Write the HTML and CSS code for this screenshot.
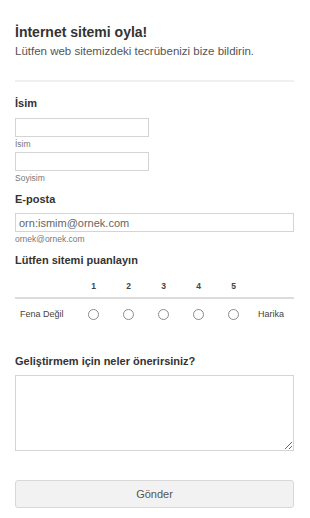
FILE: index.html
```html
<!DOCTYPE html>
<html lang="tr">
  <head>
    <meta charset="UTF-8" />
    <meta name="viewport" content="width=device-width, initial-scale=1.0" />
    <title>İnternet sitemi oyla!</title>
    <link rel="stylesheet" href="styles.css">
  </head>
  <body>
    <main class="survey">
      <h1 class="title">İnternet sitemi oyla!</h1>
      <p class="lead">Lütfen web sitemizdeki tecrübenizi bize bildirin.</p>
      <hr class="divider">

      <div class="field">
        <h2 class="label">İsim</h2>
        <input class="text-input short" type="text">
        <span class="hint">İsim</span>
        <input class="text-input short second" type="text">
        <span class="hint">Soyisim</span>
      </div>

      <div class="field">
        <h2 class="label">E-posta</h2>
        <input class="text-input wide" type="email" placeholder="orn:ismim@ornek.com">
        <span class="hint">ornek@ornek.com</span>
      </div>

      <div class="field">
        <h2 class="label">Lütfen sitemi puanlayın</h2>
        <div class="rating">
          <div class="rating-head">
            <span></span>
            <span class="num">1</span>
            <span class="num">2</span>
            <span class="num">3</span>
            <span class="num">4</span>
            <span class="num">5</span>
            <span></span>
          </div>
          <div class="rating-row">
            <span class="end">Fena Değil</span>
            <span class="cell"><input class="radio" type="radio" name="puan" value="1"></span>
            <span class="cell"><input class="radio" type="radio" name="puan" value="2"></span>
            <span class="cell"><input class="radio" type="radio" name="puan" value="3"></span>
            <span class="cell"><input class="radio" type="radio" name="puan" value="4"></span>
            <span class="cell"><input class="radio" type="radio" name="puan" value="5"></span>
            <span class="end">Harika</span>
          </div>
        </div>
      </div>

      <div class="field suggest">
        <h2 class="label">Geliştirmem için neler önerirsiniz?</h2>
        <textarea class="text-area"></textarea>
      </div>

      <button class="submit" type="submit">Gönder</button>
    </main>
  </body>
</html>
```

FILE: styles.css
```css
* {
  margin: 0;
  padding: 0;
  box-sizing: border-box;
}

body {
  background: #fff;
  font-family: "Liberation Sans", Arial, sans-serif;
  color: #555;
}

.survey {
  width: 294px;
  padding: 24px 0 0 15px;
}

.title {
  font-size: 14px;
  line-height: 17px;
  font-weight: bold;
  color: #333;
}

.lead {
  margin-top: 3px;
  font-size: 11.5px;
  line-height: 15px;
  color: #555;
}

.divider {
  margin-top: 21px;
  border: none;
  height: 2px;
  background: #f0f0f0;
}

.field {
  display: flex;
  flex-direction: column;
  align-items: flex-start;
}

.label {
  margin-top: 14px;
  font-size: 11px;
  line-height: 14px;
  font-weight: bold;
  color: #333;
}

.field + .field .label {
  margin-top: 8px;
}

.field.suggest {
  margin-top: 17px;
}

.text-input {
  margin-top: 8px;
  height: 19px;
  border: 1px solid #d4d4d4;
  padding: 0 3px;
  font-family: inherit;
  font-size: 11px;
  color: #555;
  background: #fff;
}

.text-input.short {
  width: 134px;
}

.text-input.second {
  margin-top: 2px;
}

.text-input.wide {
  margin-top: 7px;
  width: 279px;
}

.text-input::placeholder {
  color: #666;
}

.hint {
  margin-top: 1px;
  font-size: 8.5px;
  line-height: 12px;
  color: #777;
}

.rating {
  margin-top: 9px;
  width: 279px;
}

.rating-head,
.rating-row {
  display: grid;
  grid-template-columns: 61px repeat(5, 35px) 1fr;
  align-items: center;
}

.rating-head {
  height: 23px;
  border-bottom: 2px solid #dcdcdc;
  padding-bottom: 2px;
}

.num {
  text-align: center;
  font-size: 8.5px;
  font-weight: bold;
  color: #444;
}

.rating-row {
  height: 30px;
}

.end {
  padding-left: 5px;
  font-size: 9px;
  color: #444;
}

.rating-row .end:last-child {
  padding-left: 7px;
}

.cell {
  display: flex;
  justify-content: center;
}

.radio {
  appearance: none;
  width: 11px;
  height: 11px;
  border: 1px solid #8c8c8c;
  border-radius: 50%;
  background: #fff;
  margin-top: 1px;
}

.text-area {
  margin-top: 7px;
  width: 279px;
  height: 76px;
  border: 1px solid #d4d4d4;
  font-family: inherit;
  font-size: 11px;
}

.submit {
  margin-top: 29px;
  width: 279px;
  height: 28px;
  border: 1px solid #d8d8d8;
  border-radius: 3px;
  background: #f2f2f2;
  font-family: inherit;
  font-size: 11px;
  color: #555;
}
```
